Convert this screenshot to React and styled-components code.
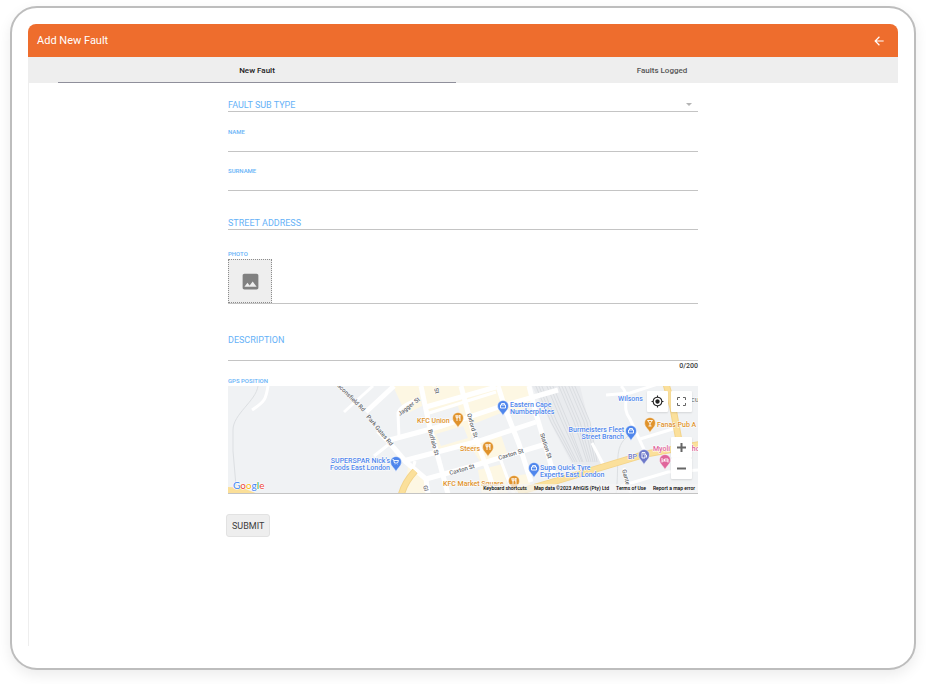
import React, { useState } from 'react';
import styled, { createGlobalStyle } from 'styled-components';
import { MdArrowBack, MdImage, MdMyLocation } from 'react-icons/md';

const colors = {
  primary: '#ee6d2d',
  bar: '#eeeeee',
  label: '#66b2f7',
  line: '#c4c4c4',
  text: '#3c3c3c',
};

const poi = {
  food: '#e0932c',
  shop: '#4f86ec',
  fuel: '#6d79c9',
  hotel: '#e0659b',
};

const GlobalStyle = createGlobalStyle`
  *, *::before, *::after {
    box-sizing: border-box;
  }

  body {
    margin: 0;
    background: #fff;
    font-family: Roboto, 'Liberation Sans', sans-serif;
    color: ${colors.text};
  }

  button, input, select, textarea {
    font-family: inherit;
    margin: 0;
  }
`;

const Tablet = styled.div`
  display: flex;
  min-height: calc(100vh - 20px);
  margin: 6px 10px 14px;
  padding: 16px 16px 22px;
  border: 2px solid #bdbdbd;
  border-radius: 27px;
  background: #fff;
  box-shadow: 0 5px 14px rgba(0, 0, 0, 0.08);
`;

const Screen = styled.div`
  display: flex;
  flex-direction: column;
  flex: 1;
  min-width: 0;
`;

const Header = styled.header`
  display: flex;
  align-items: center;
  justify-content: space-between;
  height: 33px;
  padding: 0 12px 0 9px;
  border-radius: 8px 8px 0 0;
  background: ${colors.primary};
  color: #fff;
`;

const Title = styled.h1`
  margin: 0;
  font-size: 11px;
  font-weight: 400;
  line-height: 16px;
`;

const BackButton = styled.button`
  display: flex;
  padding: 0;
  border: 0;
  background: none;
  color: inherit;
  font-size: 14px;
`;

const Tabs = styled.nav`
  display: flex;
  gap: 7px;
  height: 26px;
  padding: 0 37px 0 30px;
  background: ${colors.bar};
`;

const Tab = styled.button`
  flex: 1;
  padding: 2px 0 0;
  border: 0;
  border-bottom: 1px solid ${({ $active }) => ($active ? '#8f8f9b' : 'transparent')};
  background: none;
  color: ${({ $active }) => ($active ? '#222' : '#555')};
  font-size: 8px;
  font-weight: 500;
`;

const Body = styled.main`
  flex: 1;
  padding-top: 14px;
  box-shadow: inset 1px 0 ${colors.bar};
`;

const Form = styled.form`
  display: flex;
  flex-direction: column;
  align-items: flex-start;
  gap: 20px;
  max-width: 474px;
  margin: 0 auto;
`;

const Fields = styled.div`
  width: 100%;
  padding: 0 2px;
`;

const Field = styled.div`
  display: flex;
  flex-direction: column;
  margin-top: ${({ $gap = 0 }) => $gap}px;
`;

const Label = styled.label`
  color: ${colors.label};
  font-size: 6px;
  font-weight: 500;
  line-height: 10px;
`;

const TextInput = styled.input`
  width: 100%;
  height: 15px;
  padding: 1px 0 0;
  border: 0;
  border-bottom: 1px solid ${colors.line};
  border-radius: 0;
  outline: 0;
  background: none;
  font-size: 9px;

  &::placeholder {
    color: ${colors.label};
    opacity: 1;
  }
`;

const SelectWrapper = styled.div`
  display: flex;
  align-items: center;
  border-bottom: 1px solid ${colors.line};

  &::after {
    content: '';
    margin-right: 6px;
    border: 3px solid transparent;
    border-top-color: #b4b4b4;
    border-bottom: 0;
  }
`;

const Select = styled.select`
  flex: 1;
  height: 14px;
  padding: 1px 0 0;
  border: 0;
  outline: 0;
  appearance: none;
  background: none;
  color: ${colors.label};
  font-size: 9px;
`;

const TextArea = styled.textarea`
  width: 100%;
  height: 27px;
  padding: 0;
  border: 0;
  border-bottom: 1px solid ${colors.line};
  border-radius: 0;
  outline: 0;
  resize: none;
  background: none;
  font-size: 9px;
  line-height: 12px;

  &::placeholder {
    color: ${colors.label};
    opacity: 1;
  }
`;

const Counter = styled.span`
  align-self: flex-end;
  font-size: 7px;
  font-weight: 500;
  line-height: 10px;
`;

const PhotoRow = styled.div`
  border-bottom: 1px solid ${colors.line};
`;

const PhotoButton = styled.button`
  display: flex;
  align-items: center;
  justify-content: center;
  width: 44px;
  height: 44px;
  padding: 0;
  border: 1px dotted #8c8c8c;
  background: ${colors.bar};
  color: #808080;
  font-size: 21px;
`;

const SubmitButton = styled.button`
  height: 23px;
  padding: 0 5px;
  border: 1px solid #e2e2e2;
  border-radius: 3px;
  background: ${colors.bar};
  color: ${colors.text};
  font-size: 9px;
`;

const MapFrame = styled.div`
  position: relative;
  height: 108px;
  overflow: hidden;
  border-bottom: 1px solid ${colors.line};
`;

const MapSvg = styled.svg`
  display: block;
  width: 100%;
  height: 108px;
`;

const PlaceName = styled.text`
  font-size: 7px;
  font-weight: 500;
  fill: ${({ $color }) => $color};
  stroke: #fff;
  stroke-width: 1px;
  paint-order: stroke;
`;

const StreetName = styled.text`
  font-size: 6px;
  font-weight: 500;
  fill: #66696d;
  stroke: #fff;
  stroke-width: 1px;
  paint-order: stroke;
`;

const GoogleLogo = styled.text`
  font-family: Lato, sans-serif;
  font-size: 10px;
  stroke: #fff;
  stroke-width: 1px;
  paint-order: stroke;
`;

const MapControls = styled.div`
  position: absolute;
  top: 5px;
  right: 6px;
  display: flex;
  gap: 3px;
`;

const ZoomControls = styled.div`
  position: absolute;
  right: 6px;
  bottom: 14px;
  display: flex;
  flex-direction: column;
`;

const MapButton = styled.button`
  display: flex;
  align-items: center;
  justify-content: center;
  width: 21px;
  height: 21px;
  padding: 0;
  border: 0;
  border-radius: 1px;
  background: #fff;
  box-shadow: 0 1px 2px rgba(0, 0, 0, 0.12);
  color: ${({ $dark }) => ($dark ? '#222' : '#666')};
  font-size: 13px;
`;

const Attribution = styled.div`
  position: absolute;
  right: 0;
  bottom: 0;
  display: flex;
  gap: 7px;
  padding: 0 3px 0 1px;
  background: rgba(245, 245, 245, 0.7);
  color: #000;
  font-size: 5px;
  font-weight: 500;
  line-height: 9px;
`;

const AttributionLink = styled.a`
  color: inherit;
  text-decoration: none;
`;

const AttributionButton = styled.button`
  padding: 0;
  border: 0;
  background: none;
  color: inherit;
  font-size: 5px;
  font-weight: 500;
  line-height: 9px;
`;

const blocks = [
  'M193 0h40l12 45-4 14-30 8-10-30z',
  'M233 0h37l8 25-30 12-6 0z',
  'M270 0h31l5 20-26 6z',
  'M165 0h26l3 20-16 8z',
  'M241 58l10-3 22-6 6 18-26 10z',
  'M180 78l20 15 0 15h-22z',
  'M250 84l25-6 5 30h-26z',
  'M284 90l16-2 4 18h-18z',
];

const blockFills = [
  'M200 29l30-9 4 13-29 8z',
  'M208 48l27-8 5 12-27 8z',
  'M252 40l22-7 4 12-22 7z',
];

const smallRoads = [
  'M40 0C38 12 38 15 24 24',
  'M116 26L145 0',
  'M146 70L160 59',
  'M191 13Q170 20 170 28L171 51',
  'M198 28L233 17L268 6',
  'M187 75L184 86',
  'M272 72L279 91L286 108',
  'M378 9L402 7L430 -2',
  'M393 0C404 10 392 20 402 33L420 72',
  'M364 57L375 78',
  'M412 53L448 42',
  'M393 100L440 86L470 84',
  'M396 82L403 108',
];

const roads = [
  'M138 26L166 0',
  'M158 55L214 40L271 21L330 4',
  'M198 21L268 1',
  'M175 75L251 55L308 36',
  'M198 93L245 80L318 58',
  'M193 0L201 38L220 108',
  'M233 0L245 45L261 88L267 108',
  'M270 0L278 25L291 58L303 96',
  'M301 0L308 28L318 61L326 90',
  'M150 45L160 55L178 76L198 93L200 108',
];

const highways = [
  'M187 85Q176 97 173 110',
  'M290 106L318 98L368 83L418 68L474 58',
  'M438 -2L445 22L452 60',
];

const rails = [307, 310, 313, 318, 321, 324, 330, 333, 336, 340, 343, 346];

const streets = [
  { x: 109, y: 0, r: 45, name: 'aconsfield Rd' },
  { x: 138, y: 31, r: 50, name: 'Park Gates Rd' },
  { x: 172, y: 30, r: -38, name: 'Jagger St' },
  { x: 205, y: -1, r: 75, name: 'r St' },
  { x: 200, y: 44, r: 75, name: 'Buffalo St' },
  { x: 239, y: 28, r: 74, name: 'Oxford St' },
  { x: 222, y: 89, r: -16, name: 'Caxton St' },
  { x: 271, y: 74, r: -17, name: 'Caxton St' },
  { x: 312, y: 48, r: 72, name: 'Station St' },
  { x: 394, y: 84, r: 75, name: 'Gante' },
  { x: 195, y: 100, r: 75, name: 'Gl' },
  { x: 463, y: 16, r: 0, name: 'CU' },
];

const places = [
  { x: 189, y: 37, type: 'food', lines: ['KFC Union'], pin: [230, 32] },
  { x: 232, y: 65, type: 'food', lines: ['Steers'], pin: [260, 61] },
  { x: 215, y: 100, type: 'food', lines: ['KFC Market Square'], pin: [286, 95] },
  { x: 429, y: 41, type: 'food', lines: ['Fanas Pub A'], pin: [422, 37], icon: 'bar' },
  { x: 282, y: 21, type: 'shop', lines: ['Eastern Cape', 'Numberplates'], pin: [275, 20] },
  { x: 162, y: 77, type: 'shop', lines: ["SUPERSPAR Nick's", 'Foods East London'], pin: [168, 76], end: true, icon: 'cart' },
  { x: 312, y: 84, type: 'shop', lines: ['Supa Quick Tyre', 'Experts East London'], pin: [306, 82] },
  { x: 396, y: 46, type: 'shop', lines: ['Burmeisters Fleet', 'Street Branch'], pin: [403, 45], end: true },
  { x: 390, y: 15, type: 'shop', lines: ['Wilsons'] },
  { x: 400, y: 73, type: 'fuel', lines: ['BP'], pin: [416, 69], icon: 'fuel' },
  { x: 425, y: 65, type: 'hotel', lines: ['Myoli Guest house'], pin: [437, 74], icon: 'bed' },
];

const pinIcons = {
  food: 'M-2 -3v2q0 1 1 1v3M-1 -3v3M0 -3v2q0 1 -1 1M2 3v-6q-1 1 -1 3h1',
  shop: 'M-2.500 -1h5v3h-5zM-1.500 -1v-1.500h3v1.500',
  cart: 'M-3.500 -2.500h1l1 3.500h3l1 -2.500h-4.500M-1 2.500v.3M1.500 2.500v.3',
  fuel: 'M-2 3v-5.500h3v5.500zM1 -1l1.500 1v2.500M-1 -1h1',
  bed: 'M-3 -2v4.500M-3 1h6v1.500M3 1v-2h-3.500v2M-2 -.5h.5',
  bar: 'M-2.500 -2.500h5l-2.500 3zM0 0v3M-1.500 3h3',
};

const Pin = ({ at, type, icon }) => (
  <g transform={`translate(${at[0]} ${at[1]})`}>
    <path
      d="M0 10C-1 6 -5.500 4.500 -5.500 0A5.500 5.500 0 0 1 5.500 0C5.500 4.500 1 6 0 10z"
      fill={poi[type]}
      stroke="#fff"
      strokeWidth=".5"
    />
    <path d={pinIcons[icon || type]} fill="none" stroke="#fff" strokeWidth=".9" />
  </g>
);

const StreetMap = () => (
  <MapSvg viewBox="0 0 470 108" preserveAspectRatio="xMidYMid slice" role="img" aria-label="Map">
    <rect width="470" height="108" fill="#f0f2f4" />
    {blocks.map(d => (
      <path key={d} d={d} fill="#fdf7e3" />
    ))}
    {blockFills.map(d => (
      <path key={d} d={d} fill="#f0f2f4" />
    ))}
    <path d="M304 0H352L362 40L374 84L344 78L326 44z" fill="#e9ebee" />
    {rails.map(x => (
      <path
        key={x}
        d={`M${x} -2L${x + 16} 36L${Math.round(x * 0.6) + 161} 76`}
        fill="none"
        stroke="#dadde1"
        strokeWidth="1"
      />
    ))}
    <path d="M30 0C28 15 5 28 5 44V65L8 100" fill="none" stroke="#dcdfe2" strokeWidth="1" />
    <path d="M400 50C385 62 392 76 388 108" fill="none" stroke="#dcdfe2" strokeWidth="1" />
    <g fill="none" stroke="#fff" strokeLinejoin="round">
      {smallRoads.map(d => (
        <path key={d} d={d} strokeWidth="3" />
      ))}
      {roads.map(d => (
        <path key={d} d={d} strokeWidth="5" />
      ))}
    </g>
    <g fill="none" stroke="#f3d48b">
      {highways.map(d => (
        <path key={d} d={d} strokeWidth="7" />
      ))}
    </g>
    <g fill="none" stroke="#fbe09b">
      {highways.map(d => (
        <path key={d} d={d} strokeWidth="5" />
      ))}
    </g>
    <path d="M0 101L15 102L30 108H0z" fill="#fbdf98" />
    {streets.map(({ x, y, r, name }) => (
      <StreetName key={`${name}${x}`} transform={`translate(${x} ${y}) rotate(${r})`}>
        {name}
      </StreetName>
    ))}
    {places.map(({ x, y, type, lines, pin, end, icon }) => (
      <g key={lines[0]}>
        {lines.map((line, i) => (
          <PlaceName
            key={line}
            x={x}
            y={y + i * 7}
            $color={poi[type]}
            textAnchor={end ? 'end' : 'start'}
          >
            {line}
          </PlaceName>
        ))}
        {pin && <Pin at={pin} type={type} icon={icon} />}
      </g>
    ))}
    <GoogleLogo x="5" y="103">
      <tspan fill="#4285f4">G</tspan>
      <tspan fill="#ea4335">o</tspan>
      <tspan fill="#fbbc05">o</tspan>
      <tspan fill="#4285f4">g</tspan>
      <tspan fill="#34a853">l</tspan>
      <tspan fill="#ea4335">e</tspan>
    </GoogleLogo>
  </MapSvg>
);

const ControlIcon = ({ d, weight = 2 }) => (
  <svg
    width="11"
    height="11"
    viewBox="0 0 11 11"
    fill="none"
    stroke="currentColor"
    strokeWidth={weight}
  >
    <path d={d} />
  </svg>
);

const GpsMap = () => (
  <MapFrame>
    <StreetMap />
    <MapControls>
      <MapButton type="button" aria-label="My location" $dark>
        <MdMyLocation />
      </MapButton>
      <MapButton type="button" aria-label="Toggle fullscreen">
        <ControlIcon weight={1} d="M1.500 4V1.500H4M7 1.500H9.500V4M9.500 7V9.500H7M4 9.500H1.500V7" />
      </MapButton>
    </MapControls>
    <ZoomControls>
      <MapButton type="button" aria-label="Zoom in">
        <ControlIcon d="M5.500 1V10M1 5.500H10" />
      </MapButton>
      <MapButton type="button" aria-label="Zoom out">
        <ControlIcon d="M1 5.500H10" />
      </MapButton>
    </ZoomControls>
    <Attribution>
      <AttributionButton type="button">Keyboard shortcuts</AttributionButton>
      <span>Map data ©2023 AfriGIS (Pty) Ltd</span>
      <AttributionLink href="#terms">Terms of Use</AttributionLink>
      <AttributionLink href="#report">Report a map error</AttributionLink>
    </Attribution>
  </MapFrame>
);

const App = () => {
  const [tab, setTab] = useState('new');
  const [description, setDescription] = useState('');

  return (
    <>
      <GlobalStyle />
      <Tablet>
        <Screen>
          <Header>
            <Title>Add New Fault</Title>
            <BackButton type="button" aria-label="Back">
              <MdArrowBack />
            </BackButton>
          </Header>
          <Tabs>
            <Tab type="button" $active={tab === 'new'} onClick={() => setTab('new')}>
              New Fault
            </Tab>
            <Tab type="button" $active={tab === 'logged'} onClick={() => setTab('logged')}>
              Faults Logged
            </Tab>
          </Tabs>
          <Body>
            <Form onSubmit={e => e.preventDefault()}>
              <Fields>
                <Field>
                  <SelectWrapper>
                    <Select aria-label="Fault sub type" defaultValue="">
                      <option value="">FAULT SUB TYPE</option>
                    </Select>
                  </SelectWrapper>
                </Field>
                <Field $gap={15}>
                  <Label htmlFor="name">NAME</Label>
                  <TextInput id="name" />
                </Field>
                <Field $gap={14}>
                  <Label htmlFor="surname">SURNAME</Label>
                  <TextInput id="surname" />
                </Field>
                <Field $gap={24}>
                  <TextInput aria-label="Street address" placeholder="STREET ADDRESS" />
                </Field>
                <Field $gap={19}>
                  <Label htmlFor="photo">PHOTO</Label>
                  <PhotoRow>
                    <PhotoButton type="button" id="photo">
                      <MdImage />
                    </PhotoButton>
                  </PhotoRow>
                </Field>
                <Field $gap={30}>
                  <TextArea
                    aria-label="Description"
                    placeholder="DESCRIPTION"
                    maxLength={200}
                    value={description}
                    onChange={e => setDescription(e.target.value)}
                  />
                  <Counter>{description.length}/200</Counter>
                </Field>
                <Field $gap={5}>
                  <Label as="span">GPS POSITION</Label>
                  <GpsMap />
                </Field>
              </Fields>
              <SubmitButton type="submit">SUBMIT</SubmitButton>
            </Form>
          </Body>
        </Screen>
      </Tablet>
    </>
  );
};

export default App;
